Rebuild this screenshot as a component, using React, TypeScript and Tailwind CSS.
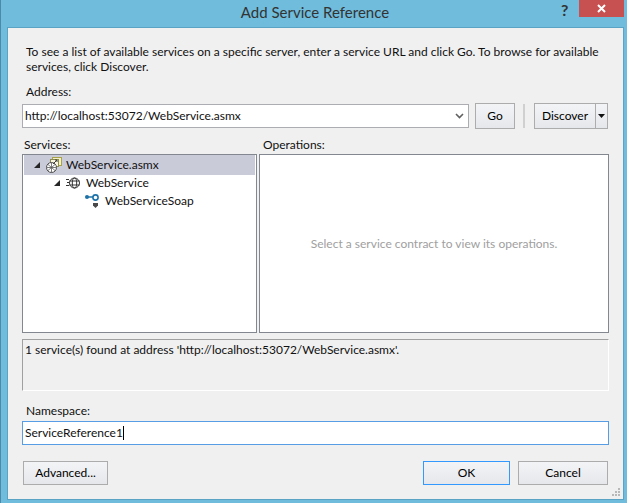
import React from "react";

function Arrow() {
  return (
    <svg width="6" height="6" viewBox="0 0 6 6" className="shrink-0">
      <path d="M6 0V6H0Z" fill="#262626" />
    </svg>
  );
}

function AsmxIcon() {
  return (
    <svg width="16" height="16" viewBox="0 0 16 16" className="shrink-0">
      <rect x="6.5" y="0.5" width="9" height="8" fill="#f4f0c8" stroke="#a8a24a" />
      <rect x="4.5" y="2.5" width="8" height="7" fill="#f8f6e0" stroke="#8c8c50" />
      <circle cx="5.5" cy="10.5" r="5" fill="#fff" stroke="#4a4a4a" />
      <path d="M1 10.5H10M5.5 5.5V15.5M2 7.5L9 13.5M9 7.5L2 13.5" stroke="#5a5a5a" strokeWidth="0.8" />
      <path d="M7 7L11 3M9 3H11V5" stroke="#3a3a3a" fill="none" />
    </svg>
  );
}

function GlobeIcon() {
  return (
    <svg width="14" height="12" viewBox="0 0 14 12" className="shrink-0">
      <path d="M0 2.5H3M1 5.5H3M0 8.5H3" stroke="#333" />
      <circle cx="8.5" cy="6" r="5" fill="#fff" stroke="#333" />
      <ellipse cx="8.5" cy="6" rx="2.2" ry="5" fill="none" stroke="#333" />
      <path d="M3.5 4H13.5M3.5 8H13.5" stroke="#333" />
    </svg>
  );
}

function SoapIcon() {
  return (
    <svg width="14" height="14" viewBox="0 0 14 14" className="shrink-0">
      <circle cx="2" cy="3" r="2" fill="#1c72a8" />
      <path d="M3 3H8" stroke="#1c72a8" strokeWidth="1.5" />
      <circle cx="10.5" cy="3.5" r="2.6" fill="#fff" stroke="#1c72a8" strokeWidth="1.6" />
      <path d="M8 9H13V11.5L10.5 14L8 11.5Z" fill="#4a4a4a" />
    </svg>
  );
}

function Btn({ children, className = "" }: { children: React.ReactNode; className?: string }) {
  return (
    <button className={`flex items-center justify-center border bg-gradient-to-b from-gray-100 to-gray-200 text-xs text-black ${className}`}>
      {children}
    </button>
  );
}

export default function App() {
  return (
    <div
      className="w-[627px] h-[503px] flex flex-col bg-[#6fbcdc] border-l border-[#4c8aa8] text-xs text-[#111] overflow-hidden"
      style={{ fontFamily: 'Lato, sans-serif' }}
    >
      <div className="h-[27px] shrink-0 flex relative">
        <div className="flex-1 text-center text-[15px] text-[#333] leading-6 pl-0.5">Add Service Reference</div>
        <div className="absolute top-0.5 left-[560px] text-base font-bold text-[#333] leading-4">?</div>
        <div className="absolute top-0 left-[578px] w-[45px] h-[17px] bg-[#c75050] flex items-center justify-center">
          <svg width="9" height="9" viewBox="0 0 9 9">
            <path d="M1 1L8 8M8 1L1 8" stroke="#fff" strokeWidth="2" />
          </svg>
        </div>
      </div>
      <div className="ml-1.5 mr-[3px] mb-[3px] flex-1 flex flex-col relative bg-[#f0f0f0] border border-[#5ba3c4] px-3.5">
        <p className="mt-4 ml-1 w-[590px] leading-[15px]">
          To see a list of available services on a specific server, enter a service URL and click Go. To browse for available services, click Discover.
        </p>
        <div className="mt-2.5 ml-1 leading-4">Address:</div>
        <div className="mt-0.5 pt-px flex items-center">
          <div className="w-[447px] h-6 border border-[#abadb3] bg-white flex items-center justify-between pl-0.5 pr-1">
            <span>http://localhost:53072/WebService.asmx</span>
            <svg width="9" height="6" viewBox="0 0 9 6">
              <path d="M1 1L4.5 4.5L8 1" stroke="#606060" strokeWidth="1.6" fill="none" />
            </svg>
          </div>
          <Btn className="ml-1.5 w-10 h-6.5 border-[#acacac]">Go</Btn>
          <div className="w-0.5 h-6 mx-2 bg-[#d0d0d0]" />
          <div className="ml-px w-[74px] h-6.5 flex border border-[#acacac] bg-gradient-to-b from-gray-100 to-gray-200 text-black">
            <div className="flex-1 flex items-center justify-center">Discover</div>
            <div className="w-3 flex items-center justify-center border-l border-[#acacac]">
              <svg width="7" height="4" viewBox="0 0 7 4"><path d="M0 0H7L3.5 4Z" fill="#111" /></svg>
            </div>
          </div>
        </div>
        <div className="mt-2 flex gap-0.5 leading-4">
          <div className="w-[235px]">
            <div className="ml-0.5 mb-px">Services:</div>
            <div className="h-[179px] border border-[#828790] bg-white px-px">
              <div className="h-5 bg-[#cacbd9] flex items-center pl-2.5">
                <Arrow />
                <span className="ml-1.5"><AsmxIcon /></span>
                <span className="ml-1">WebService.asmx</span>
              </div>
              <div className="h-4 flex items-center pl-7.5">
                <Arrow />
                <span className="ml-1.5"><GlobeIcon /></span>
                <span className="ml-1.5">WebService</span>
              </div>
              <div className="h-4 mt-0.5 flex items-center pl-[61px]">
                <SoapIcon />
                <span className="ml-1.5">WebServiceSoap</span>
              </div>
            </div>
          </div>
          <div className="flex-1">
            <div className="ml-1 mb-px">Operations:</div>
            <div className="h-[179px] border border-[#828790] bg-white flex items-center justify-center text-[#a0a0a0]">
              Select a service contract to view its operations.
            </div>
          </div>
        </div>
        <div className="mt-1.5 h-[52px] border border-t-[#a0a0a0] border-l-[#a0a0a0] border-r-white border-b-white px-0.5 leading-4 pt-0.5">
          1 service(s) found at address 'http://localhost:53072/WebService.asmx'.
        </div>
        <div className="mt-3 ml-1 leading-4">Namespace:</div>
        <div className="mt-0.5 h-6 border border-[#569de5] bg-white flex items-center px-0.5">
          <span>ServiceReference1</span>
          <span className="w-px h-3.5 bg-black" />
        </div>
        <div className="mt-4 flex">
          <Btn className="ml-px w-[85px] h-6 border-[#acacac]">Advanced...</Btn>
          <Btn className="ml-auto w-[87px] h-6 border-[#3399ff]">OK</Btn>
          <Btn className="ml-2 mr-px w-[90px] h-6 border-[#acacac]">Cancel</Btn>
        </div>
        <svg width="9" height="9" viewBox="0 0 9 9" className="absolute right-0.5 bottom-0.5">
          <path d="M6 0h2v2H6zM3 3h2v2H3zM6 3h2v2H6zM0 6h2v2H0zM3 6h2v2H3zM6 6h2v2H6z" fill="#b8b8b8" />
        </svg>
      </div>
    </div>
  );
}
